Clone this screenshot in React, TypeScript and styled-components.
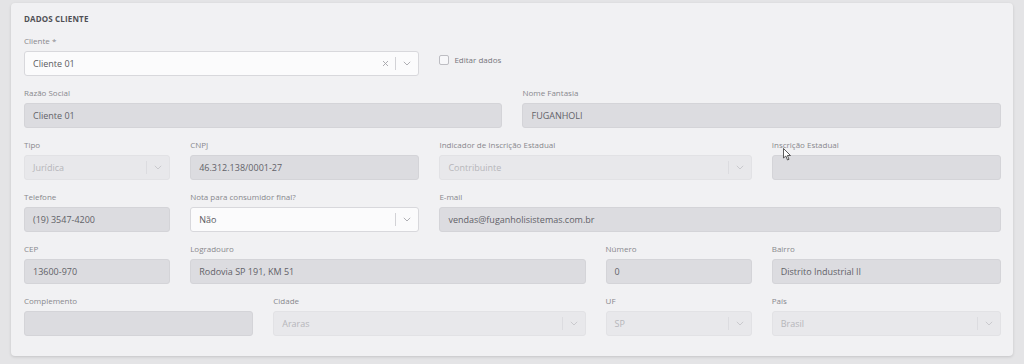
import styled, { createGlobalStyle } from 'styled-components';

const GlobalStyle = createGlobalStyle`
    body {
        margin: 0;
        background: #e4e4e6;
        font-family: 'Open Sans', 'Noto Sans', sans-serif;
    }
`;

const Page = styled.div`
    padding: 3px 11px 8px 11px;
`;
const Card = styled.section`
    position: relative;
    background: #f1f1f3;
    border-radius: 4px;
    box-shadow: 0 1px 3px rgba(0, 0, 0, 0.14);
    padding: 10px 12px 20px 13px;
`;
const Title = styled.h2`
    margin: 0 0 10px;
    font-size: 8px;
    line-height: 12px;
    font-weight: 700;
    color: #505055;
    letter-spacing: 0.15px;
`;
const Grid = styled.div`
    display: grid;
    grid-template-columns: repeat(12, 1fr);
    column-gap: 20px;
    row-gap: 11px;
`;
const Field = styled.div<{ $span: number }>`
    grid-column: span ${(p) => p.$span};
    display: flex;
    flex-direction: column;
    min-width: 0;
`;
const Label = styled.label`
    font-size: 8px;
    line-height: 11px;
    color: #88888d;
    margin-bottom: 5px;
    white-space: nowrap;
`;
const TextBox = styled.div`
    box-sizing: border-box;
    height: 25px;
    display: flex;
    align-items: center;
    padding: 0 8px;
    background: #dcdce0;
    border: 1px solid #d4d4d8;
    border-radius: 3px;
    font-size: 9px;
    color: #626268;
    white-space: nowrap;
`;
const SelectBox = styled.div<{ $disabled?: boolean }>`
    box-sizing: border-box;
    height: 25px;
    display: flex;
    align-items: center;
    padding-left: 8px;
    background: ${(p) => (p.$disabled ? '#e8e8eb' : '#fbfbfc')};
    border: 1px solid ${(p) => (p.$disabled ? '#e2e2e5' : '#d8d8dc')};
    border-radius: 3px;
    font-size: 9px;
    color: ${(p) => (p.$disabled ? '#b6b6ba' : '#5a5a60')};
`;
const SelectValue = styled.span`
    flex: 1;
    white-space: nowrap;
`;
const Clear = styled.span`
    display: flex;
    align-items: center;
    padding: 0 6px;
`;
const Separator = styled.span<{ $disabled?: boolean }>`
    width: 1px;
    height: 13px;
    background: ${(p) => (p.$disabled ? '#dcdce0' : '#d2d2d6')};
`;
const ChevronWrap = styled.span`
    display: flex;
    align-items: center;
    justify-content: center;
    width: 22px;
`;
const CheckField = styled.div<{ $span: number }>`
    grid-column: span ${(p) => p.$span};
    display: flex;
    align-items: center;
    gap: 5px;
    padding-top: 14px;
    height: 21px;
    font-size: 8px;
    color: #76767c;
`;
const CheckBox = styled.span`
    box-sizing: border-box;
    width: 10px;
    height: 10px;
    border: 1px solid #bdbdc2;
    border-radius: 2px;
    background: #f7f7f9;
`;
const Cursor = styled.svg`
    position: absolute;
    left: 772px;
    top: 145px;
`;

const Chevron = ({ faded }: { faded?: boolean }) => (
    <svg width="8" height="5" viewBox="0 0 8 5">
        <path d="M0.8 0.8 L4 4 L7.2 0.8" fill="none" stroke={faded ? '#c6c6cb' : '#a6a6ab'} strokeWidth="0.9" />
    </svg>
);

const Select = ({ value, disabled, clearable }: { value: string; disabled?: boolean; clearable?: boolean }) => (
    <SelectBox $disabled={disabled}>
        <SelectValue>{value}</SelectValue>
        {clearable && (
            <Clear>
                <svg width="7" height="7" viewBox="0 0 7 7">
                    <path d="M1 1 L6 6 M6 1 L1 6" stroke="#a4a4a9" strokeWidth="0.9" />
                </svg>
            </Clear>
        )}
        <Separator $disabled={disabled} />
        <ChevronWrap>
            <Chevron faded={disabled} />
        </ChevronWrap>
    </SelectBox>
);

type Item = { label: string; span: number; value?: string; kind?: 'text' | 'select' | 'disabled' };

const rows: Item[] = [
    { label: 'Razão Social', span: 6, value: 'Cliente 01' },
    { label: 'Nome Fantasia', span: 6, value: 'FUGANHOLI' },
    { label: 'Tipo', span: 2, value: 'Jurídica', kind: 'disabled' },
    { label: 'CNPJ', span: 3, value: '46.312.138/0001-27' },
    { label: 'Indicador de Inscrição Estadual', span: 4, value: 'Contribuinte', kind: 'disabled' },
    { label: 'Inscrição Estadual', span: 3, value: '' },
    { label: 'Telefone', span: 2, value: '(19) 3547-4200' },
    { label: 'Nota para consumidor final?', span: 3, value: 'Não', kind: 'select' },
    { label: 'E-mail', span: 7, value: 'vendas@fuganholisistemas.com.br' },
    { label: 'CEP', span: 2, value: '13600-970' },
    { label: 'Logradouro', span: 5, value: 'Rodovia SP 191, KM 51' },
    { label: 'Número', span: 2, value: '0' },
    { label: 'Bairro', span: 3, value: 'Distrito Industrial II' },
    { label: 'Complemento', span: 3, value: '' },
    { label: 'Cidade', span: 4, value: 'Araras', kind: 'disabled' },
    { label: 'UF', span: 2, value: 'SP', kind: 'disabled' },
    { label: 'País', span: 3, value: 'Brasil', kind: 'disabled' },
];

export default function App() {
    return (
        <Page>
            <GlobalStyle />
            <Card>
                <Title>DADOS CLIENTE</Title>
                <Grid>
                    <Field $span={5}>
                        <Label>Cliente *</Label>
                        <Select value="Cliente 01" clearable />
                    </Field>
                    <CheckField $span={7}>
                        <CheckBox />
                        Editar dados
                    </CheckField>
                    {rows.map((item) => (
                        <Field $span={item.span} key={item.label}>
                            <Label>{item.label}</Label>
                            {item.kind === 'select' || item.kind === 'disabled' ? (
                                <Select value={item.value ?? ''} disabled={item.kind === 'disabled'} />
                            ) : (
                                <TextBox>{item.value}</TextBox>
                            )}
                        </Field>
                    ))}
                </Grid>
                <Cursor width="9" height="13" viewBox="0 0 9 13">
                    <path d="M0.5 0.5 L0.5 10 L2.8 8 L4.5 12 L6 11.3 L4.4 7.5 L7.5 7.5 Z" fill="#fff" stroke="#333" strokeWidth="0.8" />
                </Cursor>
            </Card>
        </Page>
    );
}
